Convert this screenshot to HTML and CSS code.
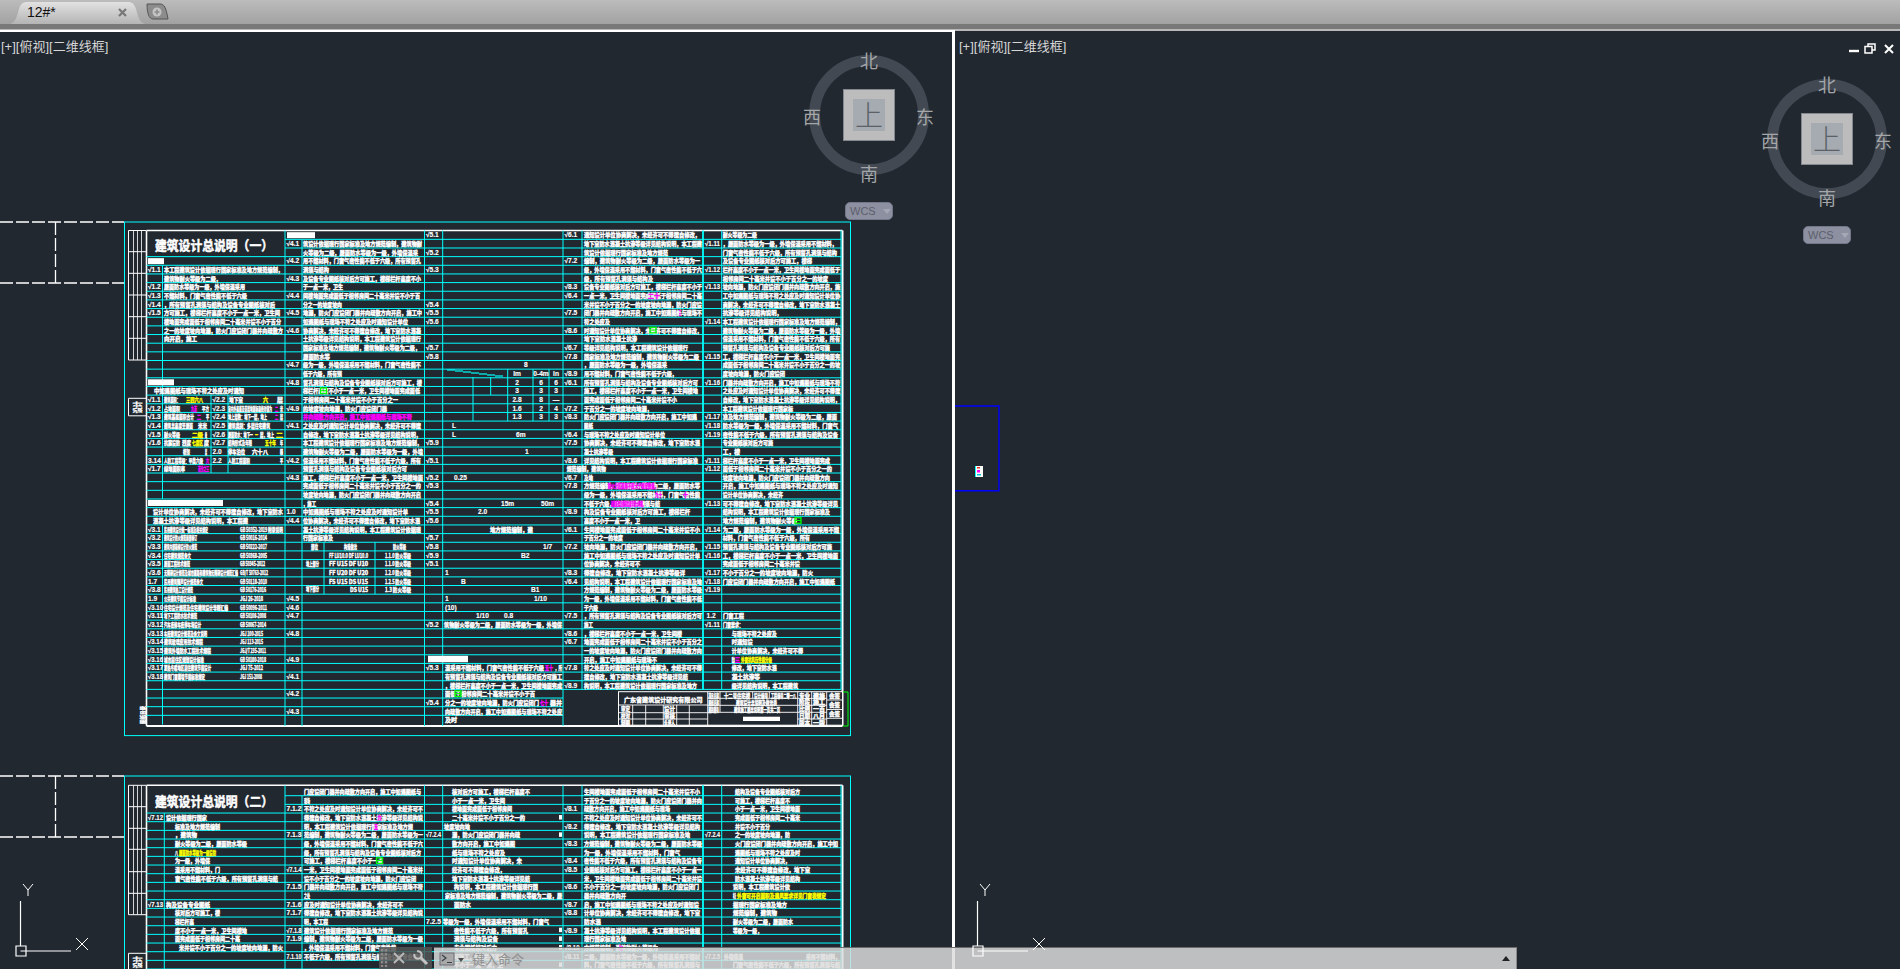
FILE: index.html
```html
<!DOCTYPE html>
<html lang="zh">
<head>
    <meta charset="UTF-8">
    <title>12#*</title>
    <link rel="stylesheet" href="styles.css">
</head>
<body>

    <!-- File tabs -->
    <div class="tabbar">
        <div class="tab">
            <svg class="tab-shape" width="135" height="24" viewBox="0 0 135 24">
                <defs>
                    <linearGradient id="tabfill" x1="0" y1="0" x2="0" y2="1">
                        <stop offset="0" stop-color="#e2e2e2"/>
                        <stop offset="1" stop-color="#b4b4b4"/>
                    </linearGradient>
                </defs>
                <path d="M0 24C6 22 7 16 9 9 11 3 13 2 18 2H117C122 2 124 3 126 9 128 16 129 22 135 24Z" fill="url(#tabfill)"/>
            </svg>
            <span class="tab-name">12#*</span>
            <svg class="tab-close" width="9" height="9" viewBox="0 0 9 9">
                <path d="M1 1 8 8M8 1 1 8" stroke="#777" stroke-width="2.2"/>
            </svg>
        </div>
        <svg class="tab-new" width="23" height="18" viewBox="0 0 23 18">
            <path d="M1 1H14C18 1 20 4 22 16H7C3 16 1 10 1 1Z" fill="#8c8c8c" stroke="#555"/>
            <circle cx="11" cy="9" r="4.5" fill="#c4c4c4"/>
            <path d="M11 6.5V11.5M8.5 9H13.5" stroke="#8c8c8c" stroke-width="1.6"/>
        </svg>
    </div>

    <div class="viewports">
        <!-- Left viewport -->
        <div class="viewport viewport-left">
            <svg id="drawing-left" class="drawing" width="952" height="937" viewBox="0 32 952 937"></svg>
            <div class="view-label">[+][俯视][二维线框]</div>
            <div class="compass compass-left">
                <div class="ring"></div>
                <div class="cube"><div class="cube-face">上</div></div>
                <span class="dir dir-n">北</span>
                <span class="dir dir-s">南</span>
                <span class="dir dir-w">西</span>
                <span class="dir dir-e">东</span>
                <div class="wcs">WCS<i class="wcs-arrow"></i></div>
            </div>
            <svg class="ucs ucs-left" width="80" height="80" viewBox="0 0 80 80">
                <path d="M5.5 18V63M5.5 68H56M1 63H11V73H1Z" fill="none" stroke="#fff" stroke-width="1.2"/>
                <path d="M8 1 13 7 18 1M13 7V13M61 55 73 67M73 55 61 67" fill="none" stroke="#fff"/>
            </svg>
        </div>

        <!-- Right viewport -->
        <div class="viewport viewport-right">
            <svg id="drawing-right" class="drawing" width="945" height="938" viewBox="955 31 945 938">
                <path d="M955 406H999V490.7H955" fill="none" stroke="#0000ff" stroke-width="1.4"/>
                <rect x="975" y="466" width="8" height="11" fill="#fff"/>
                <rect x="975" y="466" width="1" height="11" fill="#00ffff"/>
                <rect x="977" y="467" width="3" height="1.5" fill="#e03030"/>
                <rect x="977" y="470" width="3" height="2.5" fill="#ff00ff"/>
                <rect x="977" y="474" width="4" height="1.5" fill="#00c8d8"/>
            </svg>
            <div class="view-label">[+][俯视][二维线框]</div>
            <div class="window-controls">
                <svg width="50" height="12" viewBox="0 0 50 12">
                    <path d="M0 8H10" stroke="#fff" stroke-width="2.4"/>
                    <path d="M16 3.5H23V10H16ZM19 3V1H26V7H23.5" fill="none" stroke="#fff" stroke-width="1.5"/>
                    <path d="M36 2 44 10M44 2 36 10" stroke="#fff" stroke-width="2"/>
                </svg>
            </div>
            <div class="compass compass-right">
                <div class="ring"></div>
                <div class="cube"><div class="cube-face">上</div></div>
                <span class="dir dir-n">北</span>
                <span class="dir dir-s">南</span>
                <span class="dir dir-w">西</span>
                <span class="dir dir-e">东</span>
                <div class="wcs">WCS<i class="wcs-arrow"></i></div>
            </div>
            <svg class="ucs ucs-right" width="80" height="80" viewBox="0 0 80 80">
                <path d="M5.5 18V63M5.5 68H56M1 63H11V73H1Z" fill="none" stroke="#fff" stroke-width="1.2"/>
                <path d="M8 1 13 7 18 1M13 7V13M61 55 73 67M73 55 61 67" fill="none" stroke="#fff"/>
            </svg>
        </div>

        <!-- Command line, floats over both viewports -->
        <div class="cmdbar">
            <div class="cmd-handle">
                <svg width="52" height="22" viewBox="0 0 52 22">
                    <path d="M3 2V20M7 2V20" stroke="#8a8a8a" stroke-width="2.4" stroke-dasharray="2.4 1.6"/>
                    <path d="M15 6 25 16M25 6 15 16" stroke="#b8b8b8" stroke-width="2"/>
                    <g transform="translate(34 3)" fill="none" stroke="#c4c4c4">
                        <path d="M4 1.4A3.7 3.7 0 1 1 1.4 4" stroke-width="2"/>
                        <path d="M7.5 7.5 14 14" stroke-width="3"/>
                    </g>
                </svg>
            </div>
            <div class="cmd-input">
                <svg width="26" height="14" viewBox="0 0 26 14">
                    <rect x="1" y="1" width="14" height="12" fill="#a8a8a8" stroke="#6a6f78"/>
                    <path d="M3 3 7 6 3 9M8 10.5H13" fill="none" stroke="#3a3f48" stroke-width="1.2"/>
                    <path d="M19 6H25L22 10Z" fill="#4a4a4a"/>
                </svg>
                <span class="cmd-hint">键入命令</span>
                <i class="cmd-up"></i>
            </div>
        </div>
    </div>

    <script src="drawing.js"></script>
</body>
</html>
```

FILE: styles.css
```css
html, body {
    margin: 0;
    padding: 0;
    width: 1900px;
    height: 969px;
    overflow: hidden;
    background-color: #212830;
    font-family: "Liberation Sans", "Noto Sans CJK SC", sans-serif;
}

/* Tabs */
.tabbar {
    display: flex;
    align-items: flex-start;
    height: 24px;
    padding-left: 10px;
    background: linear-gradient(#bcbcbc, #a2a2a2);
    border-bottom: 5px solid #787878;
    box-shadow: 0 1px 0 #b8b8b8;
}

.tab {
    position: relative;
    display: flex;
    align-items: center;
    width: 135px;
    height: 24px;
}

.tab-shape {
    position: absolute;
    left: 0;
    top: 0;
}

.tab-name {
    position: relative;
    margin-left: 17px;
    font-size: 14px;
    color: #111;
}

.tab-close {
    position: absolute;
    left: 108px;
    top: 8px;
}

.tab-new {
    margin: 3px 0 0 1px;
}

/* Viewports */
.viewports {
    position: relative;
    display: flex;
    height: 939px;
    margin-top: 1px;
}

.viewport {
    position: relative;
    overflow: hidden;
    background-color: #212830;
}

.viewport-left {
    flex: none;
    width: 952px;
    border-top: 2px solid #fff;
    border-right: 3px solid #fff;
}

.viewport-right {
    flex: 1;
    border-top: 1px solid #b8b8b8;
}

.drawing {
    position: absolute;
    left: 0;
    top: 0;
}

.view-label {
    position: absolute;
    left: 1px;
    top: 6px;
    font-size: 13px;
    line-height: 18px;
    color: #d6d6d6;
}

.viewport-right .view-label {
    left: 4px;
    top: 7px;
}

.window-controls {
    position: absolute;
    right: 1px;
    top: 12px;
    line-height: 0;
}

/* ViewCube */
.compass {
    position: absolute;
    width: 120px;
    height: 170px;
}

.compass-left {
    left: 809px;
    top: 23px;
}

.compass-right {
    left: 812px;
    top: 48px;
}

.ring {
    box-sizing: border-box;
    width: 120px;
    height: 120px;
    border: 11px solid #424953;
    border-radius: 50%;
}

.cube {
    position: absolute;
    left: 34px;
    top: 34px;
    box-sizing: border-box;
    width: 52px;
    height: 52px;
    padding: 9px;
    background-color: #bcbcbc;
    border: 1px solid #84888e;
}

.cube-face {
    width: 32px;
    height: 32px;
    background-color: #a5abb0;
    font-family: "Noto Sans CJK SC", sans-serif;
    font-size: 28px;
    font-weight: 300;
    line-height: 30px;
    text-align: center;
    color: #5c6168;
}

.dir {
    position: absolute;
    width: 24px;
    margin-left: -12px;
    margin-top: -13px;
    text-align: center;
    font-family: "Noto Sans CJK SC", sans-serif;
    font-size: 18px;
    line-height: 26px;
    color: #a4a6a8;
}

.dir-n { left: 60px; top: 5px; }
.dir-s { left: 60px; top: 118px; }
.dir-w { left: 3px; top: 61px; }
.dir-e { left: 116px; top: 61px; }

.wcs {
    position: absolute;
    left: 36px;
    top: 147px;
    display: flex;
    align-items: center;
    box-sizing: border-box;
    width: 48px;
    height: 18px;
    padding-left: 4px;
    background-color: #8d90a0;
    border: 1px solid #74778a;
    border-radius: 5px;
    font-size: 11px;
    color: #5c5f6c;
}

.wcs-arrow {
    margin-left: 7px;
    border-left: 4px solid transparent;
    border-right: 4px solid transparent;
    border-top: 5px solid #a4a7b4;
}

/* UCS icon */
.ucs {
    position: absolute;
    z-index: 3;
}

.ucs-left {
    left: 15px;
    top: 851px;
}

.ucs-right {
    left: 17px;
    top: 852px;
}

/* Command line */
.cmdbar {
    position: absolute;
    left: 379px;
    bottom: 0;
    z-index: 2;
    display: flex;
    gap: 2px;
    width: 1138px;
    height: 22px;
}

.cmd-handle {
    width: 53px;
    background-color: rgba(84, 84, 84, 0.85);
    line-height: 0;
}

.cmd-input {
    flex: 1;
    display: flex;
    align-items: center;
    box-sizing: border-box;
    padding: 0 5px;
    background-color: rgba(220, 220, 220, 0.84);
    border-top: 1px solid #6c6c6c;
    border-right: 1px solid #8a8a8a;
}

.cmd-hint {
    margin-left: 7px;
    font-size: 13px;
    color: #909090;
}

.cmd-up {
    margin-left: auto;
    margin-right: 1px;
    border-left: 4px solid transparent;
    border-right: 4px solid transparent;
    border-bottom: 5px solid #222;
}

/* CAD text inside the drawing */
.t {
    font-family: "Noto Sans CJK SC", sans-serif;
    font-size: 5.8px;
    font-weight: 700;
    fill: #fff;
    stroke: #fff;
    stroke-width: 0.4;
}

.t-title {
    font-size: 13px;
    stroke-width: 0.5;
}

.t-mark {
    font-family: "Liberation Sans", sans-serif;
    font-size: 6.6px;
    stroke-width: 0.15;
}

.t-mag { fill: #ff00ff; stroke: #ff00ff; }
.t-yel { fill: #ffff00; stroke: #ffff00; }
```

FILE: drawing.js
```js
// The two sheets of the drawing, in page coordinates
const CYAN = "#00ffff";
const WHITE = "#ffffff";
const GREEN = "#00ff00";

const NOTES = "本工程建筑设计依据现行国家标准及地方规范编制，建筑物耐火等级为二级，屋面防水等级为一级，外墙保温采用不燃材料，" +
    "门窗气密性能不低于六级，所有预留孔洞须与结构及设备专业图纸核对后方可施工，楼梯栏杆高度不小于一点一米，" +
    "卫生间楼地面完成面低于相邻房间二十毫米并设不小于百分之一的坡度坡向地漏，防火门应设闭门器并向疏散方向开启，" +
    "施工中如遇图纸与现场不符之处应及时通知设计单位协商解决，未经许可不得擅自修改，地下室防水混凝土抗渗等级详见结构说明，";

let notePos = 0;
let out = "";

function nextNote(count) {
    let str = "";
    for (let i = 0; i < count; i++) {
        str += NOTES[notePos % NOTES.length];
        notePos++;
    }
    return str;
}

function line(x1, y1, x2, y2, color, width) {
    out += `<line x1="${x1}" y1="${y1}" x2="${x2}" y2="${y2}" stroke="${color}" stroke-width="${width || 1}"/>`;
}

function dashed(x1, y1, x2, y2) {
    out += `<line x1="${x1}" y1="${y1}" x2="${x2}" y2="${y2}" stroke="${WHITE}" stroke-width="1.3" stroke-dasharray="13 3"/>`;
}

function block(x0, x1, y, h) {
    out += `<rect x="${x0}" y="${y}" width="${x1 - x0}" height="${h}" fill="${WHITE}"/>`;
}

function put(str, x0, x1, baseline, cls) {
    out += `<text class="t ${cls || ""}" x="${x0}" y="${baseline}" textLength="${x1 - x0}" lengthAdjust="spacingAndGlyphs">${str}</text>`;
}

function makeSheet(outerTop, frameTop, rowTop, step) {
    return { outerTop, frameTop, rowTop, step, rowY: k => rowTop + step * k };
}

// a run of filler note text in row k
function row(sheet, k, x0, x1, cls) {
    const count = Math.max(2, Math.round((x1 - x0) / 5.2));
    put(nextNote(count), x0, x1, sheet.rowY(k) + 6.8, cls);
}

// a fixed string in row k
function rowStr(sheet, k, str, x0, x1, cls) {
    put(str, x0, x1, sheet.rowY(k) + 6.8, cls);
}

function mark(sheet, k, colX, str) {
    const fit = str.length > 4 ? ' textLength="15" lengthAdjust="spacingAndGlyphs"' : "";
    out += `<text class="t t-mark" x="${colX + 1.5}" y="${sheet.rowY(k) + 6.8}"${fit}>${str}</text>`;
}

function greenMark(sheet, k, x) {
    const y = sheet.rowY(k) + 1.5;
    out += `<rect x="${x}" y="${y}" width="6" height="5.5" fill="none" stroke="${GREEN}" stroke-width="1.3"/>`;
    line(x, y + 2.7, x + 6, y + 2.7, GREEN);
}

function rotated(str, x, y, length, size) {
    out += `<text class="t" style="font-size:${size}px" transform="translate(${x} ${y}) rotate(-90)" textLength="${length}" lengthAdjust="spacingAndGlyphs">${str}</text>`;
}

// dashed box on the left, cyan outer border, white frame with the binding strip
function drawBorder(sheet, title, titleCenter, frameBottom, outerBottom, stripYs, logoTop) {
    const top = sheet.outerTop;
    dashed(0, top, 124, top);
    dashed(0, top + 61, 124, top + 61);
    dashed(55.5, top, 55.5, top + 61);
    out += `<rect x="124.5" y="${top}" width="726" height="${outerBottom - top}" fill="none" stroke="${CYAN}"/>`;

    line(146.5, sheet.frameTop, 842.5, sheet.frameTop, WHITE, 1.6);
    line(146.5, sheet.frameTop, 146.5, frameBottom, WHITE, 1.6);
    line(842.5, sheet.frameTop, 842.5, frameBottom, WHITE, 2);
    line(146.5, frameBottom, 842.5, frameBottom, WHITE, 2);

    const stripBottom = stripYs[stripYs.length - 1];
    line(128.5, sheet.frameTop, 146, sheet.frameTop, WHITE);
    line(128.5, sheet.frameTop, 128.5, stripBottom, WHITE);
    stripYs.forEach(y => line(128.5, y, 146, y, WHITE));
    [133.5, 137.5, 141.5].forEach(x => line(x, sheet.frameTop, x, stripBottom, WHITE, 0.8));

    line(128.5, logoTop, 146, logoTop, WHITE);
    line(128.5, logoTop + 17.5, 146, logoTop + 17.5, WHITE);
    line(128.5, logoTop, 128.5, logoTop + 17.5, WHITE);
    rotated("设计", 141, logoTop + 15, 12, 9);

    out += `<text class="t t-title" x="155" y="${titleCenter + 5}" textLength="118" lengthAdjust="spacingAndGlyphs">${title}</text>`;
}

function drawRows(sheet, lastK, endAt) {
    for (let k = 0; k <= lastK; k++) {
        const x0 = k >= 2 ? 146.5 : 285;
        line(x0, sheet.rowY(k), endAt(k), sheet.rowY(k), CYAN);
    }
}

function drawColumns(sheet, bottom, lastRowY) {
    const top = sheet.frameTop;
    line(285, top, 285, bottom, CYAN);
    line(302, sheet.rowY(0), 302, bottom, CYAN);
    line(424.5, top, 424.5, bottom, CYAN);
    line(442.7, top, 442.7, bottom, CYAN);
    line(563, top, 563, bottom, CYAN);
    line(582, top, 582, lastRowY, CYAN);
    line(703, top, 703, lastRowY, CYAN, 1.8);
    line(721.7, top, 721.7, lastRowY, CYAN);
    line(841, top, 841, lastRowY, CYAN);
}

/* ---------- Sheet one ---------- */
function drawSheetOne() {
    const s = makeSheet(222, 230.5, 239.33, 8.655);
    const rowEnd = s.rowY(52);

    drawBorder(s, "建筑设计总说明（一）", 244.5, 726, 735.6,
        [251.7, 273.3, 295, 316.7, 338.3, 360], 398.3);
    rotated("图纸目录", 144.5, 724, 18, 6);

    drawRows(s, 55, k => k <= 52 ? 841 : 563);
    drawColumns(s, 726, rowEnd);

    // green tab at the title block
    out += `<path d="M843 692H848V726H843" fill="none" stroke="${GREEN}"/>`;

    // column A inner rules
    line(162.5, s.rowY(3), 162.5, s.rowY(30), CYAN);
    line(162.5, s.rowY(33), 162.5, 724.5, CYAN);
    line(211, s.rowY(18), 211, s.rowY(27), CYAN);
    line(228, s.rowY(18), 228, s.rowY(27), CYAN);

    // column A text
    block(148, 164, s.rowY(2) + 1.5, 6);
    [[3, 283], [4, 221], [5, 245], [6, 247], [7, 275], [8, 280], [9, 281], [10, 283], [11, 197]]
        .forEach(r => row(s, r[0], 164, r[1]));
    [3, 5, 6, 7, 8].forEach((k, i) => mark(s, k, 146.5, "√1." + (i + 1)));

    block(148, 174, s.rowY(16) + 1.5, 6);
    row(s, 17, 154, 244);

    // project data table
    rowStr(s, 18, "建筑面积：", 164, 180);
    rowStr(s, 18, "三四六八", 186, 203, "t-yel");
    rowStr(s, 18, "地下室", 229, 243);
    rowStr(s, 18, "六", 263, 268, "t-yel");
    rowStr(s, 18, "层", 277, 283);
    rowStr(s, 19, "占地面积", 164, 180);
    rowStr(s, 19, "九百", 191, 197, "t-mag");
    rowStr(s, 19, "平方", 202, 209);
    rowStr(s, 19, "室内外高差及首层地面标高绝对值为", 228, 272);
    rowStr(s, 19, "二", 275, 278, "t-mag");
    rowStr(s, 19, "米", 280, 283);
    rowStr(s, 20, "建筑基底面积合计", 164, 194);
    rowStr(s, 20, "二", 197, 201, "t-mag");
    rowStr(s, 20, "平", 206, 209);
    rowStr(s, 20, "地上层数：地下一层，地上", 228, 267);
    rowStr(s, 20, "二", 275, 278, "t-mag");
    rowStr(s, 20, "层", 280, 283);
    rowStr(s, 21, "建筑总高度至屋面", 164, 193);
    rowStr(s, 21, "米米", 198, 207);
    rowStr(s, 21, "建筑类别：多层住宅建筑", 228, 270);
    rowStr(s, 22, "耐火等级", 164, 180);
    rowStr(s, 22, "二级", 192, 203, "t-yel");
    rowStr(s, 22, "级", 205, 207);
    rowStr(s, 22, "屋面防水：地下一", 228, 253);
    rowStr(s, 22, "一", 255, 258, "t-yel");
    rowStr(s, 22, "层，地上", 260, 274);
    rowStr(s, 22, "二", 276, 283, "t-yel");
    rowStr(s, 23, "抗震设防", 164, 180);
    rowStr(s, 23, "烈度", 182, 191);
    rowStr(s, 23, "七度区", 192, 203, "t-yel");
    rowStr(s, 23, "度", 204, 209);
    rowStr(s, 23, "结构形式及年限", 228, 252);
    rowStr(s, 23, "五十年", 265, 276, "t-yel");
    rowStr(s, 23, "年", 280, 283);
    rowStr(s, 24, "框架", 183, 190);
    rowStr(s, 24, "层", 205, 207);
    rowStr(s, 24, "停车泊位", 228, 245);
    rowStr(s, 24, "六十八", 252, 268);
    rowStr(s, 24, "辆", 280, 283);
    rowStr(s, 25, "人防工程等级：甲类六级", 164, 203);
    rowStr(s, 25, "六", 206, 209, "t-mag");
    rowStr(s, 25, "人防工程面积", 228, 250);
    rowStr(s, 25, "平", 280, 283);
    rowStr(s, 26, "绿地面积率", 164, 185);
    rowStr(s, 26, "百分之三", 198, 209, "t-mag");
    [18, 19, 20, 21, 22, 23, 26].forEach((k, i) => mark(s, k, 146.5, "√1." + (i + 1)));
    mark(s, 25, 146.5, "3.14");
    [18, 19, 20, 21, 22, 23].forEach((k, i) => mark(s, k, 211, "√2." + (i + 2)));
    mark(s, 24, 211, "2.0");
    mark(s, 25, 211, "2.2");

    // list of standards
    block(148, 223, s.rowY(30) + 1, 6);
    row(s, 31, 153, 283);
    row(s, 32, 153, 248);
    const standards = [
        ["民用建筑设计统一标准及相关规定", 208, "GB 50352-2019 附录说明", 283],
        ["建筑设计防火规范局部修订", 197, "GB 50016-2014", 267],
        ["建筑内部装修设计防火规范", 197, "GB 50222-2017", 267],
        ["住宅建筑规范条文", 191, "GB 50368-2005", 267],
        ["屋面工程技术规范", 190, "GB 50345-2012", 265],
        ["无障碍设计规范及城市道路和建筑物无障碍设计规范汇编", 238, "GB/T 50763-2012", 268],
        ["民用建筑隔声设计规范条文", 203, "GB 50118-2010", 267],
        ["民用建筑热工设计规范", 193, "GB 50176-2016", 266],
        ["公共建筑节能设计标准", 196, "JGJ 26-2018", 263],
        ["住宅设计规范及住宅建筑设计导则汇编", 228, "GB 50096-2011", 267],
        ["地下工程防水技术规范", 197, "GB 50108-2008", 266],
        ["汽车库修车库停车场设计", 201, "GB 50067-2014", 266],
        ["车库建筑设计规范及条文说明", 207, "JGJ 100-2015", 263],
        ["建筑玻璃应用技术规程", 203, "JGJ 113-2015", 263],
        ["建筑外墙防水工程技术规程", 211, "JGJ/T 235-2011", 266],
        ["城市居住区规划设计标准", 204, "GB 50180-2018", 266],
        ["夏热冬暖地区居住建筑节能设计", 211, "JGJ 75-2012", 263],
        ["建筑门窗幕墙节能标准规定", 205, "JGJ 151-2008", 262]
    ];
    standards.forEach((item, i) => {
        const k = 33 + i;
        rowStr(s, k, item[0], 164, item[1]);
        rowStr(s, k, item[2], 240, item[3]);
        mark(s, k, 146.5, i === 6 ? "1.7" : i === 8 ? "1.9" : "√3." + (i + 1));
    });

    // column B marks
    [0, 2, 4, 6, 8, 10, 14, 16, 19, 21, 25, 27, 32, 41, 42, 43, 45, 48, 50, 52, 54]
        .forEach((k, i) => mark(s, k, 285, "√4." + (i % 9 + 1)));
    mark(s, 31, 285, "1.0");

    // column C text
    block(287, 315, s.rowY(-1) + 1.5, 6);
    [422, 418, 421, 329, 421, 343, 420, 342, 422, 408, 421, 421, 420, 330, 421, 342, 422, 420, 398, 387,
        412, 421, 421, 422, 423, 421, 407, 423, 421, 421, 316, 408, 420, 421, 333]
        .forEach((end, k) => row(s, k, 303, end, k === 20 ? "t-mag" : ""));
    greenMark(s, 17, 320.5);

    // small table in column C
    line(324, s.rowY(35), 324, s.rowY(41), CYAN);
    line(375, s.rowY(35), 375, s.rowY(41), CYAN);
    rowStr(s, 35, "部位", 311, 318);
    rowStr(s, 35, "构造做法", 344, 357);
    rowStr(s, 35, "防火等级", 393, 406);
    rowStr(s, 37, "地上部分", 306, 319);
    rowStr(s, 39.8, "地下部分", 306, 319);
    const fireRows = [
        ["FF LU10.0 DF LU10.0", "1.1.0 防火等级"],
        ["FF U15 DF U10", "1.1.0 防火等级"],
        ["FF U20 DF U20", "1.2.0 防火等级"],
        ["FS U15 DS U15", "1.2.5 防火等级"],
        ["DS U15", "1.3 防火等级"]
    ];
    fireRows.forEach((r, i) => {
        rowStr(s, 36 + i, r[0], i === 4 ? 350 : 329, 368);
        rowStr(s, 36 + i, r[1], 385, 411);
    });

    // column D marks
    [-1, 1, 3, 7, 8, 9, 12, 13, 23, 25, 27, 28, 30, 31, 32, 34, 35, 36, 37, 44, 49, 53]
        .forEach((k, i) => mark(s, k, 424.5, "√5." + (i % 9 + 1)));

    // stair table and scattered dimensions in column D
    for (let i = 0; i < 7; i++) {
        line(447 + i * 8, 370 + i, 455 + i * 8, 370 + i, CYAN, 1.2);
    }
    line(473, 377, 473, 421, CYAN);
    line(490.7, 377, 490.7, 395, CYAN);
    line(507.7, s.rowY(15), 507.7, s.rowY(21), CYAN);
    line(533, s.rowY(15), 533, s.rowY(21), CYAN);
    line(549, s.rowY(15), 549, s.rowY(21), CYAN);
    const stairs = [["lm", "0-4m", "ln"], ["2", "6", "6"], ["3", "3", "3"], ["2.8", "8", "—"], ["1.6", "2", "4"], ["1.3", "3", "3"]];
    stairs.forEach((r, i) => {
        [517, 541, 556].forEach((x, j) => {
            out += `<text class="t t-mark" text-anchor="middle" x="${x}" y="${s.rowY(15 + i) + 6.8}">${r[j]}</text>`;
        });
    });
    [[14, 524, "8"], [21, 452, "L"], [22, 452, "L"], [22, 516, "6m"], [24, 525, "1"], [27, 454, "0.25"],
        [30, 501, "15m"], [30, 541, "50m"], [31, 478, "2.0"], [35, 543, "1/7"], [36, 521, "B2"], [38, 445, "1"],
        [39, 461, "B"], [40, 531, "B1"], [41, 445, "1"], [41, 534, "1/10"], [42, 445, "(10)"], [43, 476, "1/10"],
        [43, 504, "0.8"]].forEach(p => {
        out += `<text class="t t-mark" x="${p[1]}" y="${s.rowY(p[0]) + 6.8}">${p[2]}</text>`;
    });
    row(s, 33, 490, 533);
    row(s, 44, 444, 562);
    block(428, 468, s.rowY(48) + 1, 6.5);
    row(s, 49, 445, 544);
    rowStr(s, 49, "五十", 545, 553, "t-mag");
    row(s, 49, 555, 562);
    row(s, 50, 445, 562);
    row(s, 51, 445, 562);
    row(s, 52, 445, 535);
    greenMark(s, 52, 455);
    row(s, 53, 445, 539);
    rowStr(s, 53, "七十", 540, 548, "t-mag");
    row(s, 53, 550, 562);
    row(s, 54, 445, 562);
    row(s, 55, 445, 457);

    // column F text
    const endsF = [700, 702, 668, 700, 702, 653, 702, 702, 702, 702, 610, 702, 637, 688, 699, 667, 677, 698, 698, 677,
        652, 697, 593, 665, 700, 613, 698, 0, 593, 700, 700, 660, 690, 640, 700, 623, 700, 700, 640, 685, 702, 702,
        702, 598, 702, 593, 682, 702, 702, 657, 702, 688, 697];
    endsF.forEach((end, i) => {
        if (end) row(s, i - 1, 584, end);
    });
    row(s, 26, 566.7, 606);
    rowStr(s, 6, "二十", 648, 660, "t-mag");
    rowStr(s, 8, "三", 679, 681, "t-mag");
    greenMark(s, 10, 650);
    rowStr(s, 28, "防火分区面积不应大于规定数值，", 608, 658, "t-mag");
    rowStr(s, 29, "九十", 655, 662, "t-mag");
    rowStr(s, 29, "十", 683, 688, "t-mag");
    rowStr(s, 30, "疏散距离及楼梯宽度详见大样图，", 611, 645, "t-mag");

    [-1, 2, 5, 6, 8, 10, 12, 13, 15, 16, 19, 20, 22, 23, 25, 27, 28, 31, 33, 35, 38, 39, 43, 45, 46, 49, 51]
        .forEach((k, i) => mark(s, k, 563, "√" + (6 + i % 3) + "." + (i % 9 + 1)));

    // column H text
    const endsH = [757, 837, 837, 812, 840, 828, 840, 840, 840, 782, 840, 840, 840, 830, 840, 840, 785, 840, 840, 840,
        793, 837, 838, 838, 773, 740, 830, 832, 830, 838, 783, 838, 830, 797, 839, 810, 832, 838, 800, 813, 835];
    endsH.forEach((end, i) => row(s, i - 1, 722.7, end));
    greenMark(s, 32, 795);
    rowStr(s, 43, "门窗工程", 723, 744);
    rowStr(s, 44, "门窗要求：", 723, 743);
    row(s, 45, 731.7, 776.7);
    row(s, 46, 731.7, 752.7);
    row(s, 47, 731.7, 803);
    row(s, 48, 731.7, 735);
    rowStr(s, 48, "三", 735, 740, "t-mag");
    rowStr(s, 48, "外窗抗风压性能分级", 741, 772, "t-yel");
    row(s, 49, 731.7, 776.7);
    row(s, 50, 731.7, 760);
    row(s, 51, 731.7, 798);

    [0, 3, 5, 9, 13, 16, 20, 21, 22, 25, 26, 30, 33, 35, 36, 38, 39, 40, 44]
        .forEach((k, i) => mark(s, k, 703.5, "√" + "1.1" + (i % 9 + 1)));
    mark(s, 43, 705, "1.2");

    drawTitleBlock();
}

function drawTitleBlock() {
    const w = 0.9;
    out += `<rect x="618.5" y="691.7" width="224" height="33.5" fill="#212830" stroke="${WHITE}"/>`;
    line(707.7, 691.7, 707.7, 725, WHITE, w);
    line(797.7, 691.7, 797.7, 725, WHITE, w);
    line(826.7, 691.7, 826.7, 725, WHITE, w);
    line(618.5, 705, 707.7, 705, WHITE, w);
    line(618.5, 712.7, 707.7, 712.7, WHITE, w);
    line(618.5, 719, 707.7, 719, WHITE, w);
    [632.7, 645.7, 663.3, 676.7, 689.3].forEach(x => line(x, 705, x, 725, WHITE, w));
    line(707.7, 698.3, 797.7, 698.3, WHITE, w);
    line(707.7, 705.3, 797.7, 705.3, WHITE, w);
    line(707.7, 712.3, 797.7, 712.3, WHITE, w);
    line(720, 691.7, 720, 712.3, WHITE, w);
    line(752.7, 691.7, 752.7, 698.3, WHITE, w);
    line(769.3, 691.7, 769.3, 698.3, WHITE, w);
    line(811.7, 691.7, 811.7, 725, WHITE, w);
    [698.3, 705.3, 712.3, 719].forEach(y => line(797.7, y, 826.7, y, WHITE, w));
    [700, 709.5, 718.3].forEach(y => line(826.7, y, 842, y, WHITE, w));

    put("广东省建筑设计研究有限公司", 624, 702.5, 702, "");
    put("项目名称", 708.5, 719, 697.5);
    put("十二号住宅楼", 724, 750, 697.5);
    put("设计编号", 754, 768, 697.5);
    put("工程编号二零一八", 771, 796, 697.5);
    put("图纸名称", 708.5, 719, 704.5);
    put("建筑设计总说明及做法表", 736, 777, 704.5);
    put("图别图号", 708.5, 719, 711.5);
    put("建筑施工图总说明第一页共二页", 734, 780, 711.5);
    put("审定", 621, 630, 711);
    put("校对", 621, 630, 718);
    put("制图", 621, 630, 724.5);
    put("设计", 664, 675, 711);
    put("审核", 664, 675, 718);
    put("负责人", 664, 675, 724.5);
    block(743, 780, 716.7, 4.3);
    ["专业", "阶段", "比例", "日期", "版本"].forEach((str, i) => {
        put(str, 799, 810, 697.5 + i * 6.9);
    });
    ["建施", "施工", "一百", "八月", "一版"].forEach((str, i) => {
        put(str, 813, 825, 697.5 + i * 6.9);
    });
    put("会签", 829, 840, 698);
    put("会签", 829, 840, 707);
    put("会签", 829, 840, 716);
}

/* ---------- Sheet two (cut off by the window) ---------- */
function drawSheetTwo() {
    const s = makeSheet(776, 785.3, 795.7, 8.667);

    drawBorder(s, "建筑设计总说明（二）", 801, 1000, 1000,
        [806.7, 828.3, 849.3, 871.7, 893.3, 914.7], 953.3);

    drawRows(s, 20, () => 841);
    drawColumns(s, 1000, 1000);
    line(164.3, s.rowY(2), 164.3, 1000, CYAN);

    // column A
    [[2, 166, 207], [3, 175, 220], [4, 175, 197], [5, 175, 247], [7, 175, 210], [8, 175, 220], [9, 175, 278],
        [12, 166, 210], [13, 175, 220], [14, 175, 194], [15, 175, 247], [16, 175, 240], [17, 179, 283]]
        .forEach(r => row(s, r[0], r[1], r[2]));
    rowStr(s, 6, "八", 175, 178);
    rowStr(s, 6, "屋面防水等级为一级设防", 179, 216, "t-yel");
    mark(s, 2, 146.5, "√7.12");
    mark(s, 12, 146.5, "√7.13");

    // column C
    const endsC = [421, 310, 423, 423, 413, 423, 423, 421, 383, 423, 416, 423, 310, 403, 423, 328, 393, 423, 396, 423];
    endsC.forEach((end, i) => row(s, i - 1, 304, end));
    rowStr(s, 2, "六", 377.5, 381.5, "t-mag");
    rowStr(s, 3, "五", 374, 378, "t-mag");
    greenMark(s, 7, 376.5);
    [[1, "7.1.2"], [4, "7.1.3"], [8, "√7.1.4"], [10, "7.1.5"], [12, "7.1.6"], [13, "7.1.7"], [15, "√7.1.8"], [16, "7.1.9"], [18, "7.1.10"]]
        .forEach(m => mark(s, m[0], 285, m[1]));

    // column D
    mark(s, 4, 424.5, "√7.2.4");
    mark(s, 14, 424.5, "7.2.5");
    [[-1, 452, 530], [0, 452, 505], [1, 452, 512], [2, 452, 525], [3, 444, 470], [4, 452, 520], [5, 452, 515], [6, 452, 505],
        [7, 452, 522], [8, 452, 505], [9, 452, 530], [10, 454, 538], [11, 445, 562], [12, 454, 471], [14, 443, 549],
        [15, 454, 528], [16, 454, 498], [17, 454, 497], [18, 454, 505], [19, 454, 503]]
        .forEach(r => row(s, r[0], r[1], r[2]));
    [2, 4, 15, 16, 17, 19].forEach(k => block(559, 562, s.rowY(k) + 2, 4.5));

    // column F
    const endsF = [700, 702, 670, 702, 700, 690, 702, 680, 702, 702, 702, 699, 626, 699, 700, 601, 700, 626, 658, 700, 700];
    endsF.forEach((end, i) => row(s, i - 1, 584, end));
    rowStr(s, 17, "七", 618, 623, "t-mag");
    [1, 3, 5, 7, 8, 10, 12, 13, 15, 17, 18].forEach((k, i) => mark(s, k, 563, "√8." + (i + 1)));

    // column H
    [[-1, 735, 800], [0, 735, 790], [1, 735, 800], [2, 735, 800], [3, 735, 770], [4, 735, 790], [5, 735, 838], [6, 735, 800],
        [7, 735, 790], [8, 735, 810], [9, 735, 800], [10, 733, 790], [12, 733, 787], [13, 733, 777], [14, 733, 793], [15, 733, 762],
        [18, 724, 743], [18, 806, 840], [19, 733, 840]]
        .forEach(r => row(s, r[0], r[1], r[2]));
    row(s, 11, 733, 736);
    rowStr(s, 11, "外窗可开启面积及通风要求详见门窗表规定", 737, 826, "t-yel");
    mark(s, 4, 703.5, "√7.2.4");
    mark(s, 18, 703.5, "√7.2.5");
}

drawSheetOne();
drawSheetTwo();
document.getElementById("drawing-left").innerHTML = out;
```
